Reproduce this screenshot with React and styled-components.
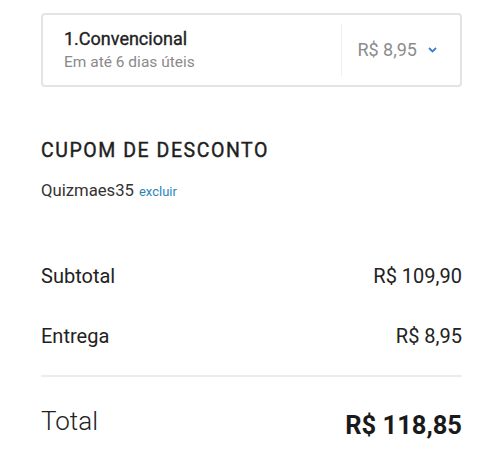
import React from "react";
import styled, { createGlobalStyle } from "styled-components";

const Global = createGlobalStyle`
  body { margin: 0; background: #fff; font-family: Roboto, "Noto Sans", sans-serif; color: #222; }
`;

const Page = styled.div`
  width: 421px;
  margin-left: 41px;
  padding-top: 13px;
`;

const Card = styled.div`
  box-sizing: border-box;
  height: 74px;
  border: 2px solid #e4e4e4;
  border-radius: 4px;
  display: flex;
  align-items: center;
`;

const Info = styled.div`
  flex: 1;
  padding-left: 21px;
  display: flex;
  flex-direction: column;
  gap: 3px;
`;

const Title = styled.div`
  font-size: 18px;
  line-height: 20px;
  font-weight: 400;
  -webkit-text-stroke: 0.35px #222;
  color: #222;
`;

const Sub = styled.div`
  font-size: 15.5px;
  line-height: 20px;
  color: #8a8a8a;
`;

const VDivider = styled.div`
  width: 1px;
  height: 52px;
  background: #efefef;
`;

const PriceBox = styled.div`
  display: flex;
  align-items: center;
  padding: 0 23px 0 15px;
  gap: 11px;
`;

const Price = styled.span`
  font-size: 18px;
  line-height: 20px;
  color: #8c8c8c;
`;

const Heading = styled.h2`
  margin: 52px 0 0;
  font-size: 19.5px;
  line-height: 24px;
  font-weight: 400;
  -webkit-text-stroke: 0.4px #1e1e1e;
  letter-spacing: 1.55px;
  color: #1e1e1e;
`;

const Coupon = styled.div`
  margin-top: 17px;
  font-size: 16.7px;
  line-height: 22px;
  color: #333;
  display: flex;
  align-items: baseline;
  gap: 5px;
`;

const Link = styled.a`
  font-size: 13px;
  color: #2a86b8;
  text-decoration: none;
`;

const Summary = styled.div`
  margin-top: 61px;
  display: flex;
  flex-direction: column;
  gap: 36px;
`;

const Row = styled.div`
  display: flex;
  justify-content: space-between;
  align-items: flex-start;
  font-size: 20px;
  line-height: 24px;
  color: #222;
`;

const Rule = styled.hr`
  margin: 27px 0 0;
  border: 0;
  height: 2px;
  background: #ececec;
`;

const TotalRow = styled.div`
  margin-top: 28px;
  display: flex;
  justify-content: space-between;
  align-items: flex-start;
`;

const TotalLabel = styled.span`
  font-size: 26px;
  line-height: 32px;
  font-weight: 300;
  color: #222;
`;

const TotalValue = styled.span`
  font-size: 25.5px;
  line-height: 32px;
  font-weight: 700;
  color: #1a1a1a;
  padding-top: 4px;
`;

const Chevron = () => (
  <svg width="9" height="6" viewBox="0 0 9 6" fill="none">
    <path d="M1 1l3.5 3.5L8 1" stroke="#3a80d0" strokeWidth="1.8" />
  </svg>
);

export default function App() {
  return (
    <>
      <Global />
      <Page>
        <Card>
          <Info>
            <Title>1.Convencional</Title>
            <Sub>Em até 6 dias úteis</Sub>
          </Info>
          <VDivider />
          <PriceBox>
            <Price>R$ 8,95</Price>
            <Chevron />
          </PriceBox>
        </Card>
        <Heading>CUPOM DE DESCONTO</Heading>
        <Coupon>
          Quizmaes35 <Link href="#">excluir</Link>
        </Coupon>
        <Summary>
          <Row>
            <span>Subtotal</span>
            <span>R$ 109,90</span>
          </Row>
          <Row>
            <span>Entrega</span>
            <span>R$ 8,95</span>
          </Row>
        </Summary>
        <Rule />
        <TotalRow>
          <TotalLabel>Total</TotalLabel>
          <TotalValue>R$ 118,85</TotalValue>
        </TotalRow>
      </Page>
    </>
  );
}
